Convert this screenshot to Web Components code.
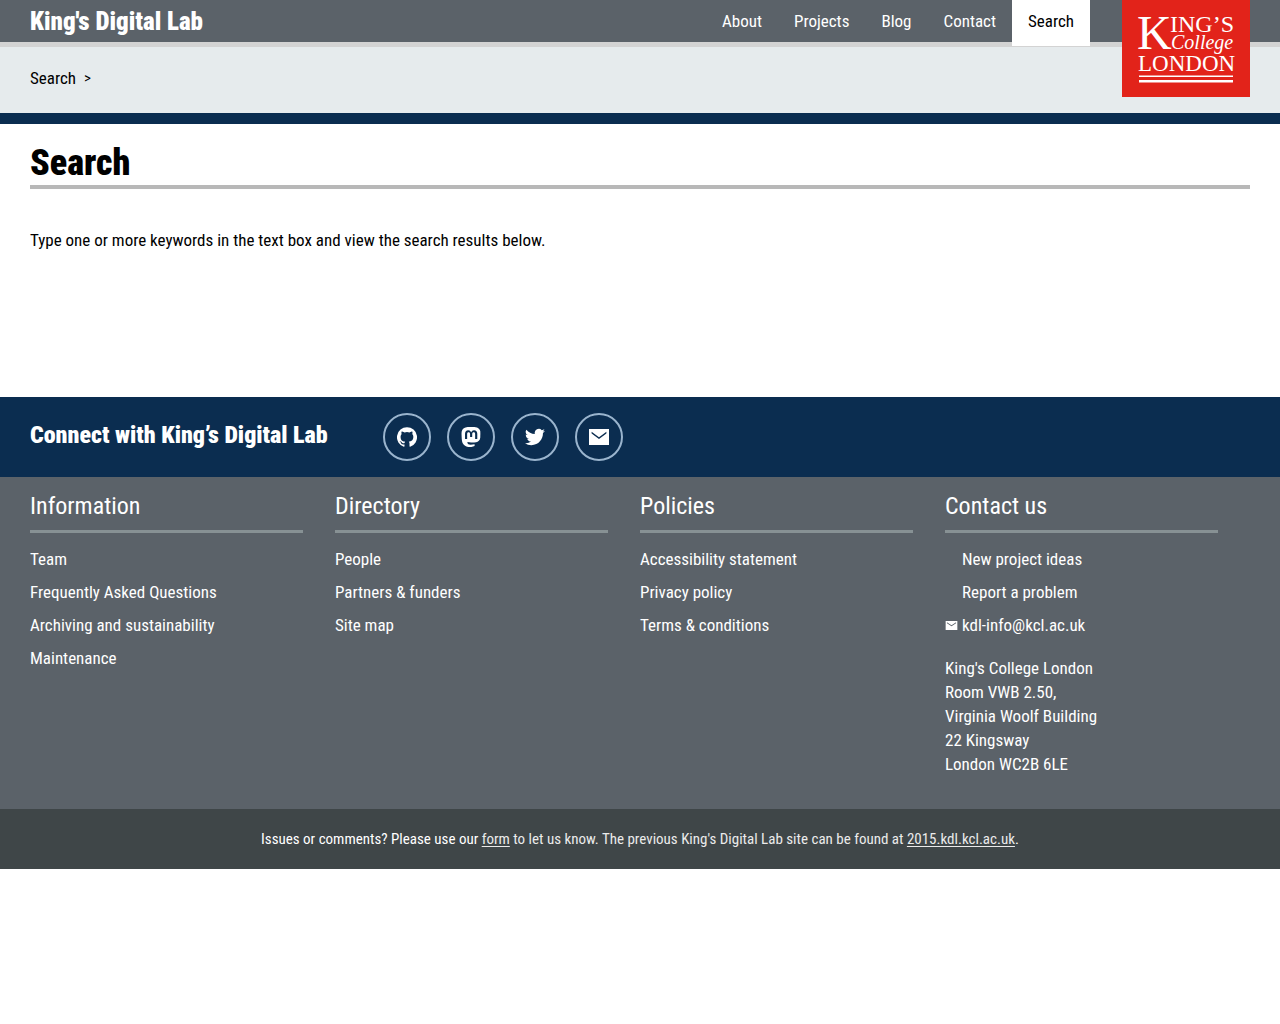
<!DOCTYPE html>
<html lang="en">
<head>
<meta charset="utf-8">
<meta name="viewport" content="width=device-width, initial-scale=1">
<title>Search - King's Digital Lab</title>
<style>
  body { margin: 0; background: #fff; color: #000; font: 17px/24px "Roboto Condensed", "Liberation Sans", sans-serif; }
</style>
</head>
<body>
<kdl-header>
  <kdl-nav-link href="#about">About</kdl-nav-link>
  <kdl-nav-link href="#projects">Projects</kdl-nav-link>
  <kdl-nav-link href="#blog">Blog</kdl-nav-link>
  <kdl-nav-link href="#contact">Contact</kdl-nav-link>
  <kdl-nav-link href="#search" current>Search</kdl-nav-link>
</kdl-header>
<kdl-breadcrumb><a href="#search">Search</a></kdl-breadcrumb>
<kdl-page>
  <span slot="title">Search</span>
  Type one or more keywords in the text box and view the search results below.
</kdl-page>
<kdl-connect></kdl-connect>
<kdl-directory></kdl-directory>
<kdl-notice></kdl-notice>

<script>
const define = (name, html) => {
  const template = document.createElement('template');
  template.innerHTML = html;
  customElements.define(name, class extends HTMLElement {
    constructor() {
      super();
      this.attachShadow({ mode: 'open' }).append(template.content.cloneNode(true));
    }
    connectedCallback() {
      const link = this.shadowRoot.querySelector('a[data-host]');
      if (!link) return;
      link.href = this.getAttribute('href');
      if (this.hasAttribute('label')) link.setAttribute('aria-label', this.getAttribute('label'));
      if (this.hasAttribute('current')) link.setAttribute('aria-current', 'page');
    }
  });
};

define('kdl-nav-link', `
<style>
  :host { display: block; }
  a { display: block; box-sizing: border-box; height: 46px; padding: 9px 16px 0; color: #fff; text-decoration: none; }
  a[aria-current] { background: #fff; color: #000; }
</style>
<a data-host><slot></slot></a>`);

define('kdl-logo', `
<style>
  :host { display: block; width: 128px; height: 97px; background: #e2231a; }
  a, svg { display: block; }
  text { font-family: "Liberation Serif", serif; fill: #fff; }
</style>
<a href="#kcl" aria-label="King's College London">
<svg width="128" height="97" viewBox="0 0 128 97">
  <text x="15" y="49" font-size="48">K</text>
  <text x="48" y="32" font-size="24">ING’S</text>
  <text x="49" y="49" font-size="20" font-style="italic">College</text>
  <text x="16" y="71" font-size="23">LONDON</text>
  <path d="M17 75.5h94v1.5h-94zM17 80h94v2.5h-94z" fill="#fff"/>
</svg></a>`);

define('kdl-header', `
<style>
  :host { display: block; }
  header { display: flex; justify-content: space-between; height: 42px; padding: 0 30px; background: #5b6269; border-bottom: 5px solid #d3d3d3; }
  .brand { color: #fff; font-size: 25px; font-weight: 900; line-height: 44px; text-decoration: none; }
  .right { display: flex; gap: 32px; }
  nav { display: flex; }
</style>
<header>
  <a class="brand" href="#home">King's Digital Lab</a>
  <div class="right"><nav aria-label="Main"><slot></slot></nav><kdl-logo></kdl-logo></div>
</header>`);

define('kdl-breadcrumb', `
<style>
  :host { display: block; }
  nav { display: flex; gap: 8px; padding: 19px 30px 23px; background: #e6ebed; border-bottom: 11px solid #0a2d50; }
  ::slotted(a) { color: #000; text-decoration: none; }
  .sep { font-size: 15px; }
</style>
<nav aria-label="Breadcrumb"><slot></slot><span class="sep">&gt;</span></nav>`);

define('kdl-page', `
<style>
  :host { display: block; }
  main { padding: 17px 30px 145px; }
  h1 { margin: 0 0 39px; font-size: 36px; line-height: 44px; font-weight: 900; border-bottom: 4px solid #b8b8b8; }
  p { margin: 0; }
</style>
<main><h1><slot name="title"></slot></h1><p><slot></slot></p></main>`);

define('kdl-social', `
<style>
  :host { display: block; }
  a { display: grid; place-items: center; box-sizing: border-box; width: 48px; height: 48px; border: 2px solid #9ab4cd; border-radius: 50%; color: #fff; }
</style>
<a data-host><slot></slot></a>`);

define('kdl-connect', `
<style>
  :host { display: block; }
  section { display: flex; align-items: center; gap: 55px; height: 80px; padding: 0 30px; background: #0b2d50; color: #fff; }
  h2 { margin: 0; padding-bottom: 4px; font-size: 24px; line-height: 32px; font-weight: 900; }
  div { display: flex; gap: 16px; }
  svg { display: block; fill: currentColor; }
</style>
<section>
  <h2>Connect with King’s Digital Lab</h2>
  <div>
    <kdl-social href="#github" label="GitHub"><svg width="20" height="20" viewBox="0 0 24 24"><path d="M12 .3a12 12 0 0 0-3.8 23.4c.6.1.8-.3.8-.6v-2.2c-3.3.7-4-1.4-4-1.4-.6-1.4-1.4-1.8-1.4-1.8-1-.7.1-.7.1-.7 1.2 0 1.9 1.2 1.9 1.2 1 1.8 2.8 1.3 3.5 1 0-.8.4-1.3.7-1.6-2.7-.3-5.5-1.3-5.5-6 0-1.2.5-2.3 1.3-3.1-.2-.4-.6-1.6 0-3.2 0 0 1-.3 3.4 1.2a11.5 11.5 0 0 1 6 0c2.3-1.5 3.3-1.2 3.3-1.2.6 1.6.2 2.8 0 3.2.9.8 1.3 1.9 1.3 3.2 0 4.6-2.8 5.6-5.5 5.9.5.4.9 1 .9 2.2v3.3c0 .3.1.7.8.6A12 12 0 0 0 12 .3"/></svg></kdl-social>
    <kdl-social href="#mastodon" label="Mastodon"><svg width="20" height="20" viewBox="0 0 24 24"><path d="M23.27 5.31c-.35-2.58-2.62-4.61-5.3-5C17.51.24 15.79 0 11.81 0h-.03c-3.98 0-4.83.24-5.29.31C3.88.69 1.5 2.52.92 5.13.64 6.41.61 7.84.66 9.14c.07 1.88.09 3.75.26 5.61.12 1.24.33 2.47.62 3.68.55 2.24 2.78 4.1 4.96 4.86 2.33.79 4.84.92 7.24.38.27-.06.53-.13.79-.21.59-.19 1.28-.4 1.79-.76v-1.87a21 21 0 0 1-4.71.54c-2.73 0-3.46-1.28-3.67-1.82a6 6 0 0 1-.32-1.43c1.52.36 3.07.55 4.63.55.38 0 .75 0 1.13-.01 1.57-.05 3.22-.13 4.77-.43 2.43-.46 4.75-1.92 4.99-5.62.01-.14.03-1.52.03-1.67 0-.51.17-3.64-.02-5.57zm-3.75 9.2h-2.56V8.29c0-1.31-.55-1.98-1.67-1.98-1.23 0-1.85.79-1.85 2.35v3.4h-2.55v-3.4c0-1.56-.62-2.35-1.85-2.35-1.11 0-1.67.67-1.67 1.98v6.22H4.82V8.1c0-1.31.34-2.35 1.01-3.12.7-.77 1.61-1.16 2.75-1.16 1.31 0 2.3.5 2.96 1.5l.64 1.06.64-1.06c.66-1 1.65-1.5 2.96-1.5 1.13 0 2.05.39 2.75 1.16.68.77 1.01 1.81 1.01 3.12z"/></svg></kdl-social>
    <kdl-social href="#twitter" label="Twitter"><svg width="20" height="20" viewBox="0 0 24 24"><path d="M23.95 4.57a10 10 0 0 1-2.82.77 5 5 0 0 0 2.16-2.72c-.95.55-2 .95-3.13 1.18a4.92 4.92 0 0 0-8.38 4.48A14 14 0 0 1 1.64 3.16a4.9 4.9 0 0 0 1.52 6.57 4.9 4.9 0 0 1-2.23-.61v.06a4.92 4.92 0 0 0 3.95 4.83 5 5 0 0 1-2.21.08 4.94 4.94 0 0 0 4.6 3.42A9.87 9.87 0 0 1 0 19.54a14 14 0 0 0 7.55 2.21c9.05 0 14-7.5 14-13.98l-.02-.64a10 10 0 0 0 2.42-2.56z"/></svg></kdl-social>
    <kdl-social href="#email" label="Email"><svg width="20" height="20" viewBox="0 0 20 20"><path fill-rule="evenodd" d="M0 2h20v16H0zM2.6 4.8v1.7L10 12l7.4-5.5V4.8L10 10.2z"/></svg></kdl-social>
  </div>
</section>`);

define('kdl-link-group', `
<style>
  :host { display: block; color: #fff; }
  h2 { margin: 0 0 14px; padding-bottom: 8px; border-bottom: 3px solid #879194; font-size: 24px; line-height: 32px; font-weight: 400; }
  .links { display: flex; flex-direction: column; align-items: flex-start; gap: 9px; }
  ::slotted(a) { color: #fff; text-decoration: none; }
  ::slotted(address) { margin-top: 10px; font-style: normal; }
</style>
<h2><slot name="title"></slot></h2>
<div class="links"><slot></slot></div>`);

define('kdl-directory', `
<style>
  :host { display: block; }
  footer { display: grid; grid-template-columns: repeat(4, 1fr); padding: 13px 30px 33px; background: #5b6269; }
  kdl-link-group { padding-right: 32px; }
  .mark { display: grid; grid-template-columns: 13px auto; column-gap: 4px; align-items: center; }
  .mark::before { content: ""; grid-row: 1; }
  .mail::before { display: none; }
  svg { display: block; fill: #fff; }
</style>
<footer>
  <kdl-link-group><span slot="title">Information</span><a href="#team">Team</a><a href="#faq">Frequently Asked Questions</a><a href="#archiving">Archiving and sustainability</a><a href="#maintenance">Maintenance</a></kdl-link-group>
  <kdl-link-group><span slot="title">Directory</span><a href="#people">People</a><a href="#partners">Partners &amp; funders</a><a href="#sitemap">Site map</a></kdl-link-group>
  <kdl-link-group><span slot="title">Policies</span><a href="#accessibility">Accessibility statement</a><a href="#privacy">Privacy policy</a><a href="#terms">Terms &amp; conditions</a></kdl-link-group>
  <kdl-link-group><span slot="title">Contact us</span><a class="mark" href="#ideas">New project ideas</a><a class="mark" href="#problem">Report a problem</a><a class="mark mail" href="mailto:kdl-info@kcl.ac.uk"><svg width="13" height="13" viewBox="0 0 20 20"><path fill-rule="evenodd" d="M1 3h18v14H1zM3 5v1.6l7 4.6 7-4.6V5l-7 4.6z"/></svg>kdl-info@kcl.ac.uk</a><address>King's College London<br>Room VWB 2.50,<br>Virginia Woolf Building<br>22 Kingsway<br>London WC2B 6LE</address></kdl-link-group>
</footer>`);

define('kdl-notice', `
<style>
  :host { display: block; }
  p { margin: 0; padding: 18px 30px; background: #3f4648; color: #fff; font-size: 15px; text-align: center; }
  a { color: inherit; text-underline-offset: 2px; }
  .soft { color: #ebebeb; }
</style>
<p>Issues or comments? Please use our <span class="soft"><a href="#form">form</a> to let us know. The previous King's Digital Lab site can be found at <a href="#2015">2015.kdl.kcl.ac.uk</a></span>.</p>`);
</script>
</body>
</html>
